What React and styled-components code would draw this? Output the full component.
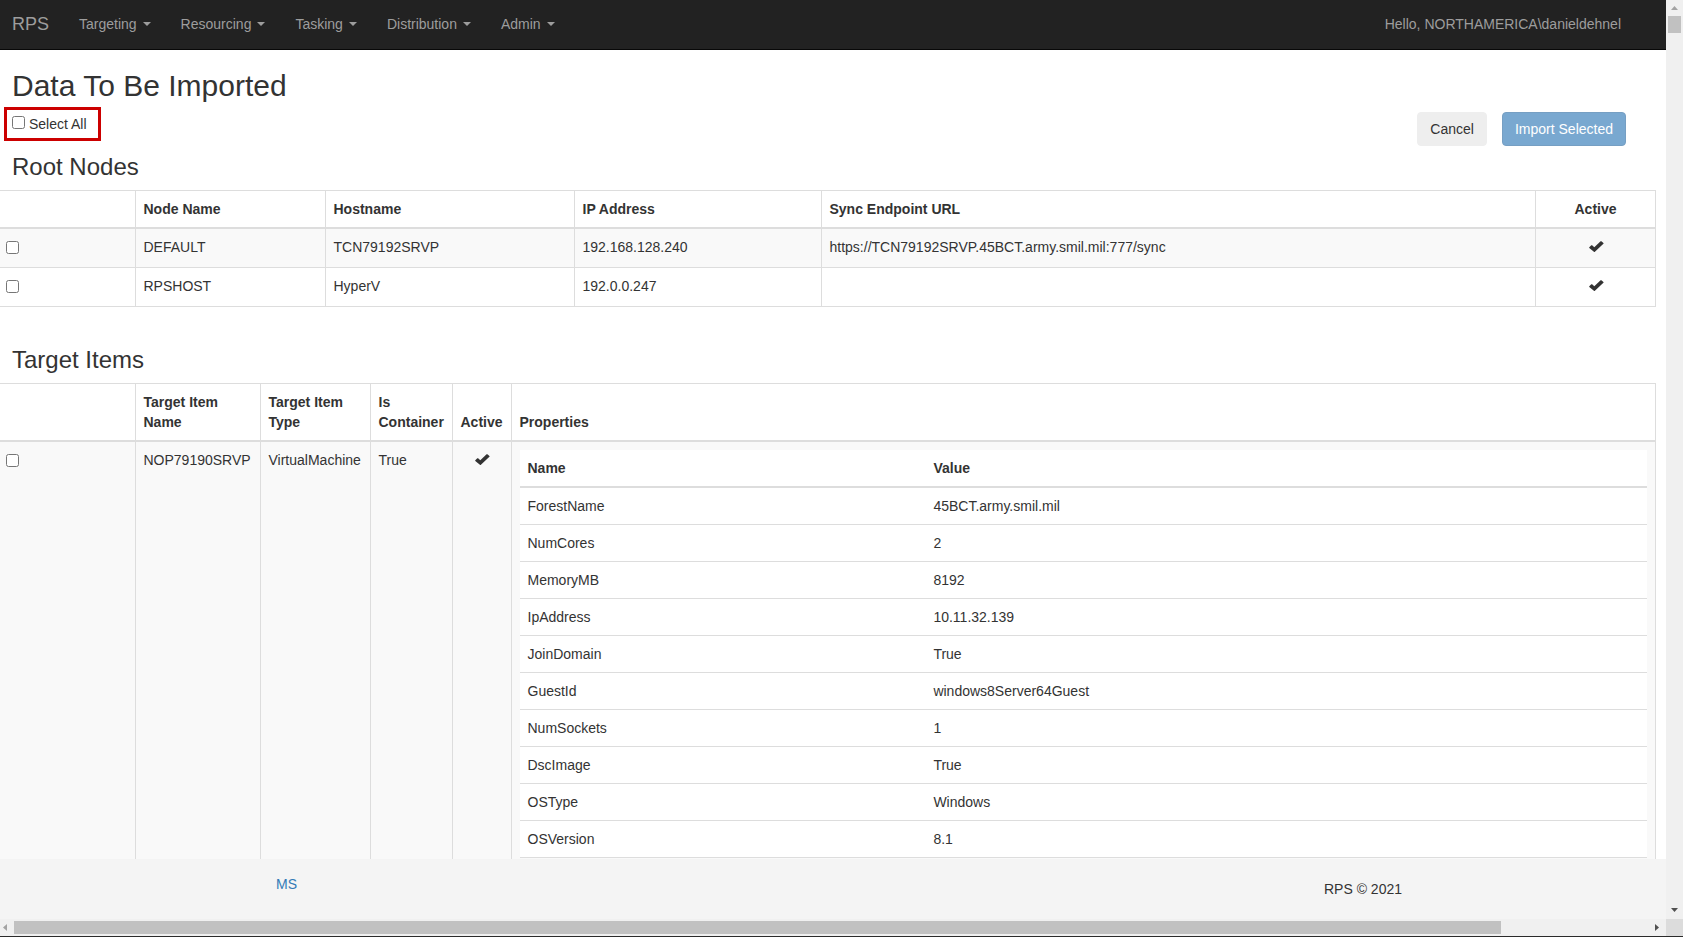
import React, { useState } from 'react'
import styled, { createGlobalStyle } from 'styled-components';

const GlobalStyle = createGlobalStyle`
  * {
    box-sizing: border-box;
  }

  body {
    margin: 0;
    color: #333;
    background: #fff;
    font-family: "Liberation Sans", Arial, sans-serif;
    font-size: 14px;
    line-height: 20px;
  }

  input[type="checkbox"] {
    width: 13px;
    height: 13px;
    margin: 0;
  }
`

const Frame = styled.div`
  display: grid;
  grid-template-columns: minmax(0, 1fr) 17px;
  grid-template-rows: minmax(0, 1fr) 17px;
  height: 100vh;
  border-bottom: 1px solid #2b2b2b;
`

const Page = styled.div`
  display: flex;
  flex-direction: column;
  min-height: 0;
`

const Navbar = styled.nav`
  display: flex;
  align-items: center;
  flex: none;
  height: 50px;
  padding: 0 45px 2px 12px;
  background: #222;
  border-bottom: 1px solid #080808;
  color: #9d9d9d;
`

const Brand = styled.a`
  margin-right: 30px;
  color: #9d9d9d;
  font-size: 18px;
  text-decoration: none;
`

const Menu = styled.div`
  display: flex;
  flex: 1;
  gap: 30px;
`

const MenuButton = styled.button`
  display: flex;
  align-items: center;
  gap: 6px;
  padding: 0;
  border: 0;
  background: none;
  color: #9d9d9d;
  font: inherit;
`

const Caret = styled.span`
  border-top: 4px solid;
  border-right: 4px solid transparent;
  border-left: 4px solid transparent;
`

const Content = styled.main`
  flex: 1;
  min-height: 0;
  padding-right: 10px;
  overflow: auto;
  scrollbar-width: none;
`

const Title = styled.h1`
  margin: 19px 12px 5px;
  font-size: 30px;
  font-weight: 400;
  line-height: 33px;
`

const Toolbar = styled.div`
  display: flex;
  justify-content: space-between;
  height: 47px;
  padding: 0 30px 0 4px;
`

const SelectAll = styled.label`
  display: flex;
  gap: 4px;
  height: 34px;
  padding: 4px 11px 0 5px;
  border: 3px solid #c00;

  input[type="checkbox"] {
    margin-top: 2px;
  }
`

const Actions = styled.div`
  display: flex;
  align-items: flex-start;
  gap: 15px;
  padding-top: 5px;
`

const Button = styled.button`
  padding: 6px 12px;
  border: 1px solid ${props => props.$primary ? '#2e6da4' : '#eee'};
  border-radius: 4px;
  background: ${props => props.$primary ? '#337ab7' : '#eee'};
  color: ${props => props.$primary ? '#fff' : '#333'};
  font: inherit;

  &:disabled {
    opacity: 0.65;
  }
`

const SectionTitle = styled.h2`
  margin: 0 12px 10px;
  font-size: 24px;
  font-weight: 400;
  line-height: 26px;
`

const Table = styled.table`
  width: 100%;
  margin-bottom: 40px;
  border-collapse: collapse;
  table-layout: fixed;
`

const Th = styled.th`
  width: ${props => props.$width || 'auto'};
  padding: 8px;
  border: 1px solid #ddd;
  border-bottom-width: 2px;
  text-align: ${props => props.$center ? 'center' : 'left'};
  vertical-align: bottom;

  &:first-child {
    border-left: 0;
  }
`

const Td = styled.td`
  height: 39px;
  padding: 8px;
  border: 1px solid #ddd;
  text-align: ${props => props.$center ? 'center' : 'left'};
  vertical-align: top;

  &:first-child {
    padding-left: 6px;
    border-left: 0;
  }

  tr:nth-child(odd) > & {
    background: #f9f9f9;
  }

  input[type="checkbox"] {
    display: block;
    margin-top: 4px;
  }
`

const PropertyTable = styled.table`
  width: 100%;
  border-collapse: collapse;
  background: #fff;

  th, td {
    padding: 8px;
    border-bottom: 1px solid #ddd;
    text-align: left;
  }

  th {
    border-bottom-width: 2px;
  }

  th:first-child {
    width: 36%;
  }
`

const Footer = styled.footer`
  display: flex;
  flex: none;
  justify-content: space-between;
  height: 60px;
  padding: 15px 264px 0 276px;
  background: #f4f4f4;

  a {
    color: #337ab7;
    text-decoration: none;
  }
`

const Copyright = styled.span`
  padding-top: 5px;
`

const VerticalBar = styled.div`
  display: flex;
  flex-direction: column;
  align-items: center;
  justify-content: space-between;
  padding: 6px 0 7px;
  background: #f0f0f0;
`

const VerticalThumb = styled.div`
  width: 13px;
  height: 17px;
  margin-top: 6px;
  background: #c1c1c1;
`

const HorizontalBar = styled.div`
  display: grid;
  grid-template-columns: 14px 1487fr 151fr 14px;
  align-items: center;
  background: #f0f0f0;
`

const HorizontalThumb = styled.div`
  height: 13px;
  background: #c1c1c1;
`

const Corner = styled.div`
  background: #dcdcdc;
`

const Arrow = styled.svg`
  display: block;
  margin-left: 3px;
  fill: ${props => props.$dim ? '#a3a3a3' : '#505050'};

  ${VerticalBar} & {
    margin-left: 0;
  }
`

const CheckIcon = styled.svg`
  display: inline-block;
  fill: #333;
`

const menus = ['Targeting', 'Resourcing', 'Tasking', 'Distribution', 'Admin']

const nodes = [
  { name: 'DEFAULT', host: 'TCN79192SRVP', ip: '192.168.128.240', url: 'https://TCN79192SRVP.45BCT.army.smil.mil:777/sync' },
  { name: 'RPSHOST', host: 'HyperV', ip: '192.0.0.247', url: '' },
]

const properties = [
  ['ForestName', '45BCT.army.smil.mil'],
  ['NumCores', '2'],
  ['MemoryMB', '8192'],
  ['IpAddress', '10.11.32.139'],
  ['JoinDomain', 'True'],
  ['GuestId', 'windows8Server64Guest'],
  ['NumSockets', '1'],
  ['DscImage', 'True'],
  ['OSType', 'Windows'],
  ['OSVersion', '8.1'],
]

const target = 'NOP79190SRVP'
const allNames = [...nodes.map(node => node.name), target]

function Check() {
  return (
    <CheckIcon width="16" height="11" viewBox="0 0 16 11" role="img" aria-label="Yes">
      <path d="M1.3 6.2 3.3 4.3Q3.7 4 4.1 4.3L6.3 6.2 12.6 0.3Q13 0 13.4 0.3L15.4 2Q15.8 2.4 15.4 2.8L6.9 10.7Q6.4 11.1 5.9 10.7L1.3 7Q1 6.6 1.3 6.2Z" />
    </CheckIcon>
  )
}

function App() {
  const [selected, setSelected] = useState([])

  const toggle = name => setSelected(
    selected.includes(name) ? selected.filter(item => item !== name) : [...selected, name]
  )

  const toggleAll = event => setSelected(event.target.checked ? allNames : [])

  return (
    <Frame>
      <GlobalStyle />
      <Page>
        <Navbar>
          <Brand href="#">RPS</Brand>
          <Menu>
            {menus.map(menu => (
              <MenuButton key={menu} type="button">{menu}<Caret /></MenuButton>
            ))}
          </Menu>
          <span>Hello, NORTHAMERICA\danieldehnel</span>
        </Navbar>

        <Content>
          <Title>Data To Be Imported</Title>
          <Toolbar>
            <SelectAll>
              <input type="checkbox" checked={selected.length === allNames.length} onChange={toggleAll} />
              Select All
            </SelectAll>
            <Actions>
              <Button type="button">Cancel</Button>
              <Button type="button" $primary disabled={selected.length === 0}>Import Selected</Button>
            </Actions>
          </Toolbar>

          <SectionTitle>Root Nodes</SectionTitle>
          <Table>
            <thead>
              <tr>
                <Th $width="135px" />
                <Th $width="190px">Node Name</Th>
                <Th $width="249px">Hostname</Th>
                <Th $width="247px">IP Address</Th>
                <Th>Sync Endpoint URL</Th>
                <Th $width="120px" $center>Active</Th>
              </tr>
            </thead>
            <tbody>
              {nodes.map(node => (
                <tr key={node.name}>
                  <Td>
                    <input type="checkbox" aria-label={node.name} checked={selected.includes(node.name)} onChange={() => toggle(node.name)} />
                  </Td>
                  <Td>{node.name}</Td>
                  <Td>{node.host}</Td>
                  <Td>{node.ip}</Td>
                  <Td>{node.url}</Td>
                  <Td $center><Check /></Td>
                </tr>
              ))}
            </tbody>
          </Table>

          <SectionTitle>Target Items</SectionTitle>
          <Table>
            <thead>
              <tr>
                <Th $width="135px" />
                <Th $width="125px">Target Item Name</Th>
                <Th $width="110px">Target Item Type</Th>
                <Th $width="82px">Is Container</Th>
                <Th $width="59px" $center>Active</Th>
                <Th>Properties</Th>
              </tr>
            </thead>
            <tbody>
              <tr>
                <Td>
                  <input type="checkbox" aria-label={target} checked={selected.includes(target)} onChange={() => toggle(target)} />
                </Td>
                <Td>{target}</Td>
                <Td>VirtualMachine</Td>
                <Td>True</Td>
                <Td $center><Check /></Td>
                <Td>
                  <PropertyTable>
                    <thead>
                      <tr>
                        <th>Name</th>
                        <th>Value</th>
                      </tr>
                    </thead>
                    <tbody>
                      {properties.map(([name, value]) => (
                        <tr key={name}>
                          <td>{name}</td>
                          <td>{value}</td>
                        </tr>
                      ))}
                    </tbody>
                  </PropertyTable>
                </Td>
              </tr>
            </tbody>
          </Table>
        </Content>

        <Footer>
          <a href="#">MS</a>
          <Copyright>RPS © 2021</Copyright>
        </Footer>
      </Page>

      <VerticalBar aria-hidden="true">
        <div>
          <Arrow $dim width="13" height="4" viewBox="0 0 13 4"><path d="M3 4 6.5 0 10 4Z" /></Arrow>
          <VerticalThumb />
        </div>
        <Arrow width="7" height="4" viewBox="0 0 7 4"><path d="M0 0H7L3.5 4Z" /></Arrow>
      </VerticalBar>
      <HorizontalBar aria-hidden="true">
        <Arrow $dim width="4" height="7" viewBox="0 0 4 7"><path d="M4 0V7L0 3.5Z" /></Arrow>
        <HorizontalThumb />
        <span />
        <Arrow width="4" height="7" viewBox="0 0 4 7"><path d="M0 0V7L4 3.5Z" /></Arrow>
      </HorizontalBar>
      <Corner />
    </Frame>
  )
}

export default App;
